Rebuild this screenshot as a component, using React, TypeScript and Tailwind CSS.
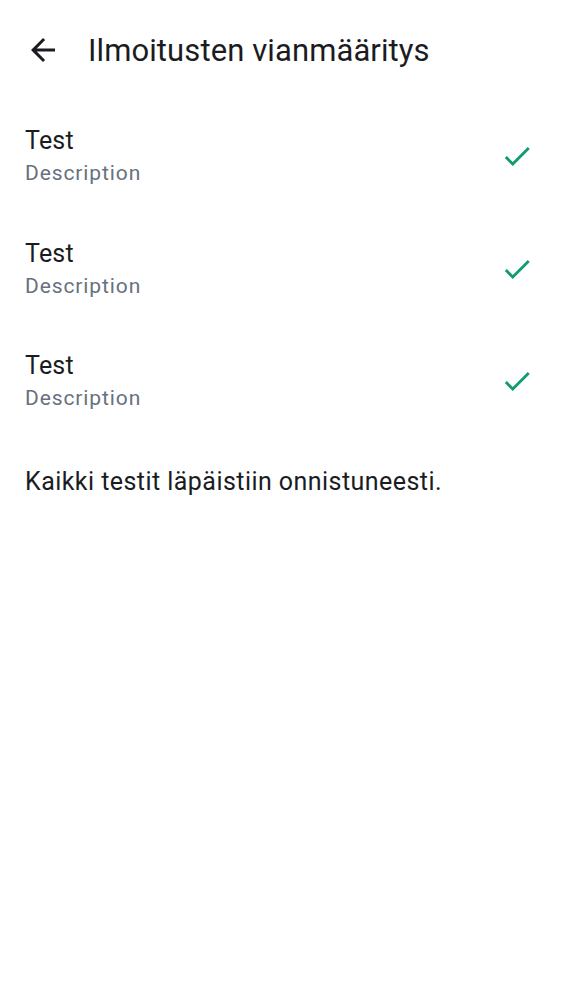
export default function App() {
  const tests = [
    { name: "Test", description: "Description" },
    { name: "Test", description: "Description" },
    { name: "Test", description: "Description" },
  ];

  return (
    <div
      className="min-h-screen w-[562px] bg-white text-[#1b1c1f]"
      style={{ fontFamily: "Roboto, 'Noto Sans', sans-serif" }}
    >
      <header className="flex h-[100px] items-center">
        <button className="ml-[25px] flex h-[36px] w-[36px] items-center justify-center">
          <svg width="36" height="36" viewBox="0 0 24 24">
            <path
              d="M20 11H7.83l5.59-5.59L12 4l-8 8 8 8 1.41-1.41L7.83 13H20v-2z"
              fill="#1b1c1f"
            />
          </svg>
        </button>
        <h1 className="ml-[27px] text-[31px] leading-none tracking-[0.1px]">
          Ilmoitusten vianmääritys
        </h1>
      </header>

      <ul>
        {tests.map((t, i) => (
          <li key={i} className="flex h-[112.5px] items-center pl-[25px] pr-[28px]">
            <div className="flex-1 pt-[2px]">
              <div className="text-[25px] leading-[33px] tracking-[0.2px]">{t.name}</div>
              <div className="text-[21px] leading-[33px] tracking-[0.9px] text-[#68717d]">
                {t.description}
              </div>
            </div>
            <svg width="34" height="34" viewBox="0 0 24 24">
              <path
                d="M9 16.17L4.83 12l-1.42 1.41L9 19 21 7l-1.41-1.41z"
                fill="#0e9b73"
              />
            </svg>
          </li>
        ))}
      </ul>

      <p className="mt-[27px] px-[25px] text-[25px] leading-[33px] tracking-[0.45px]">
        Kaikki testit läpäistiin onnistuneesti.
      </p>
    </div>
  );
}
